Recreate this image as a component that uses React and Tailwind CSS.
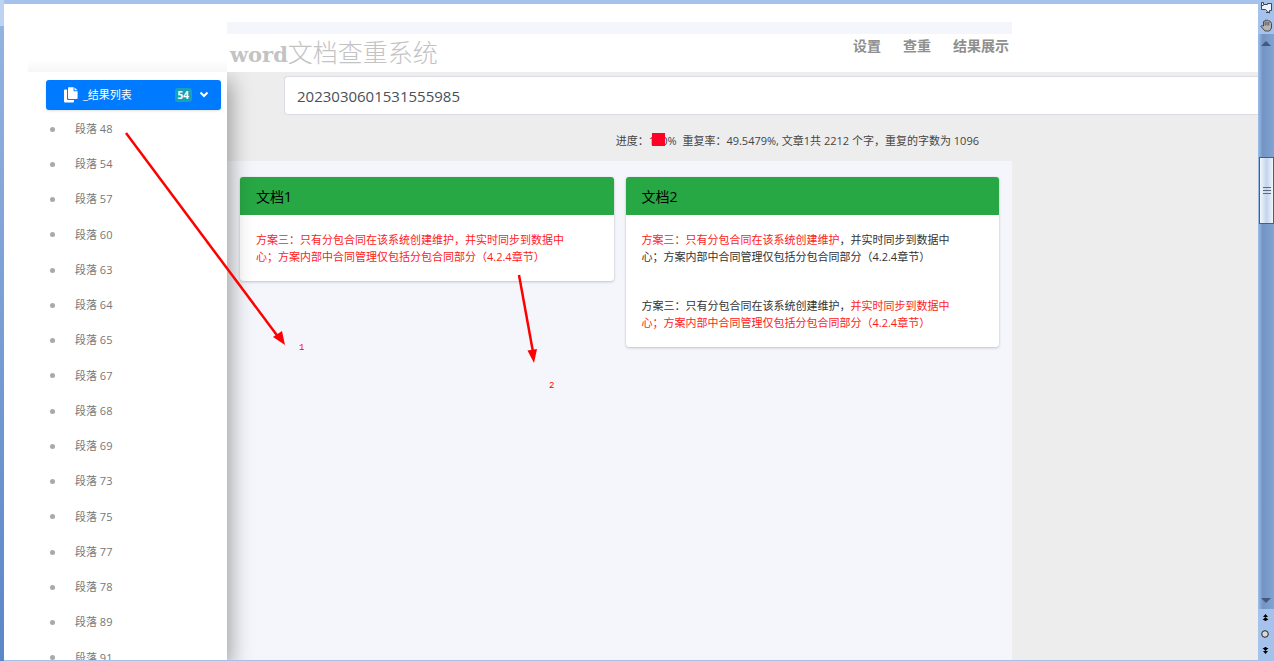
import React, { useState } from 'react';

const PARAGRAPHS = [48, 54, 57, 60, 63, 64, 65, 67, 68, 69, 73, 75, 77, 78, 89, 91];
const NAV = ['设置', '查重', '结果展示'];

function Header() {
  return (
    <header className="flex h-[68px] shrink-0 bg-white">
      <div className="flex w-[223px] shrink-0 flex-col justify-end pl-6">
        <div className="h-3 bg-linear-to-b from-white to-[#f6f6f6]" />
      </div>
      <div className="flex w-[785px] flex-col pt-[18px]">
        <div className="h-3 shrink-0 bg-[#f4f6fb]" />
        <div className="flex flex-1 items-start justify-between pr-[3px] pl-[3px]">
          <h1 className="flex items-baseline pt-[2px] leading-[30px] text-[#c3c3c3]">
            <span className="font-['DejaVu_Serif',serif] text-[21px] font-bold">word</span>
            <span className="font-['Noto_Sans_CJK_SC',sans-serif] text-[25px] font-light">文档查重系统</span>
          </h1>
          <nav className="flex gap-[22px] pt-[2px] text-[14px] leading-5 font-bold text-[#8f8f8f]">
            {NAV.map(n => (
              <a key={n} href="#">{n}</a>
            ))}
          </nav>
        </div>
      </div>
    </header>
  );
}

function Sidebar() {
  const [open, setOpen] = useState(true);

  return (
    <aside className="z-10 flex w-[223px] shrink-0 flex-col bg-white pt-2 shadow-[4px_8px_20px_rgba(0,0,0,0.35)]">
      <button
        type="button"
        aria-expanded={open}
        onClick={() => setOpen(!open)}
        className="mr-[6px] ml-[42px] flex h-[30px] w-[175px] shrink-0 items-center rounded-[3px] bg-[#007bff] pr-3 pl-[18px] text-[11px] text-white shadow-sm"
      >
        <svg width="14" height="16" viewBox="0 0 14 16" fill="currentColor" aria-hidden="true">
          <path d="M0 3.5Q0 2.5 1 2.5H3V12Q3 13 4 13H10V14.5Q10 15.5 9 15.5H1Q0 15.5 0 14.5Z" />
          <path d="M4 1Q4 0.3 4.8 0.3H9.6V4.2H13.6V11Q13.6 12 12.6 12H5Q4 12 4 11Z" />
          <path d="M10.5 0.4L13.6 3.3H10.5Z" />
        </svg>
        <span className="ml-[5px]">_结果列表</span>
        <span className="ml-auto flex h-[14px] items-center rounded-[3px] bg-[#17a2b8] px-[3px] text-[10px] font-bold">54</span>
        <svg className="ml-[7px]" width="10" height="8" viewBox="0 0 10 8" fill="none" stroke="currentColor" strokeWidth="2" aria-hidden="true">
          <path d="M1.5 1.5L5 5L8.5 1.5" />
        </svg>
      </button>
      {open && (
        <ul className="-mb-3 flex flex-1 flex-col justify-between pt-[5px] pl-[46px] text-[11px] text-[#777777]">
          {PARAGRAPHS.map(p => (
            <li key={p} className="flex h-7 shrink-0 items-center">
              <span className="mr-[20px] h-[5px] w-[5px] rounded-full bg-[#a9a9a9]" />
              <a href="#">段落 {p}</a>
            </li>
          ))}
        </ul>
      )}
    </aside>
  );
}

function Card({ title, children }) {
  return (
    <section className="flex-1 overflow-hidden rounded-[3px] bg-white shadow-[0_0_1px_rgba(0,0,0,0.15),0_1px_3px_rgba(0,0,0,0.2)]">
      <h2 className="flex h-[38px] items-center bg-[#28a745] px-4 text-[14px] text-black">{title}</h2>
      <div className="flex flex-col gap-8 p-4 text-[11px] leading-[17px] text-[#333333]">{children}</div>
    </section>
  );
}

function Compare() {
  return (
    <div className="flex w-[785px] flex-1 items-start gap-3 bg-[#f4f6fb] px-[13px] pt-4">
      <Card title="文档1">
        <p className="text-[#ff1a1a]">
          方案三：只有分包合同在该系统创建维护，并实时同步到数据中<br />
          心；方案内部中合同管理仅包括分包合同部分（4.2.4章节）
        </p>
      </Card>
      <Card title="文档2">
        <p>
          <span className="text-[#ff1a1a]">方案三：只有分包合同在该系统创建维护</span>，并实时同步到数据中<br />
          心；方案内部中合同管理仅包括分包合同部分（4.2.4章节）
        </p>
        <p>
          方案三：只有分包合同在该系统创建维护，
          <span className="text-[#ff1a1a]">
            并实时同步到数据中<br />
            心；方案内部中合同管理仅包括分包合同部分（4.2.4章节）
          </span>
        </p>
      </Card>
    </div>
  );
}

function ScrollBar() {
  return (
    <div className="flex w-4 shrink-0 flex-col bg-[#a4c2eb]">
      <div className="flex h-[34px] shrink-0 flex-col items-center justify-between py-[2px]">
        <svg width="13" height="12" viewBox="0 0 13 12" fill="#eef3fb" stroke="#3c4658" aria-hidden="true">
          <path d="M1.5 0.5H3.5V2.5H7.5V1.5H11.5V8.5H9.5V11L7.5 9.5L5.5 7.5H1.5Z" />
          <path d="M1.5 3.5H3.5M6 10.5H9.5" />
        </svg>
        <svg width="13" height="13" viewBox="0 0 13 13" aria-hidden="true">
          <path d="M3.5 7V2.5Q4.3 1.5 5 2.5V1.5Q6 0.5 6.8 1.5Q7.8 0.7 8.6 1.8Q10 1.5 10.2 3Q11.5 3 11.5 4.5V9L9.5 12H5L1 7.5Q1 6 3.5 7Z" fill="#b5b5b5" stroke="#4a4a4a" />
          <path d="M5.2 3V6.5M7 2.5V6.5M8.8 3V6.5" stroke="#555555" />
        </svg>
      </div>
      <div className="flex flex-1 flex-col items-center bg-linear-to-r from-[#9dbde8] via-[#7294c4] via-30% to-[#83a4d2]">
        <svg className="mt-[7px]" width="10" height="5" viewBox="0 0 10 5" aria-hidden="true">
          <path d="M0 5L5 0L10 5Z" fill="#43597f" />
        </svg>
        <div className="mt-[111px] flex h-[67px] w-[15px] flex-col items-center justify-center gap-[2px] self-end border border-[#405f92] bg-linear-to-r from-[#f2f7fd] via-[#c3d5ea] to-[#eef4fb]">
          <span className="h-px w-2 bg-[#5c6b80]" />
          <span className="h-px w-2 bg-[#5c6b80]" />
          <span className="h-px w-2 bg-[#5c6b80]" />
        </div>
        <svg className="mt-auto mb-[6px]" width="10" height="5" viewBox="0 0 10 5" aria-hidden="true">
          <path d="M0 0L5 5L10 0Z" fill="#43597f" />
        </svg>
      </div>
      <div className="flex h-[52px] shrink-0 flex-col items-center justify-between pt-[5px] pr-[2px] pb-[7px]">
        <svg width="7" height="7" viewBox="0 0 7 7" aria-hidden="true">
          <path d="M3.5 0L6 3H1ZM3.5 3L6.5 6H4.5V7H2.5V6H0.5Z" fill="#000000" />
        </svg>
        <svg width="8" height="8" viewBox="0 0 8 8" aria-hidden="true">
          <circle cx="4" cy="4" r="3.3" fill="#d8d8d8" stroke="#222222" />
        </svg>
        <svg width="7" height="7" viewBox="0 0 7 7" aria-hidden="true">
          <path d="M3.5 7L6 4H1ZM3.5 4L6.5 1H4.5V0H2.5V1H0.5Z" fill="#000000" />
        </svg>
      </div>
    </div>
  );
}

// red arrows and step numbers drawn over the page
function Annotations() {
  return (
    <svg
      className="pointer-events-none absolute top-0 left-0 z-20"
      width="600"
      height="400"
      viewBox="0 0 600 400"
      fill="#ff0000"
      aria-hidden="true"
    >
      <path d="M126 133L279 338" stroke="#ff0000" strokeWidth="2.5" />
      <path d="M285 345L273 337L282 331Z" />
      <path d="M519 275L533 352" stroke="#ff0000" strokeWidth="2.5" />
      <path d="M534 363L527.5 350.5L537 349Z" />
      <text x="299" y="350" fontSize="9" fontFamily="Liberation Mono, monospace">1</text>
      <text x="549" y="388" fontSize="9" fontFamily="Liberation Mono, monospace">2</text>
    </svg>
  );
}

export default function App() {
  const [task, setTask] = useState('2023030601531555985');

  return (
    <div className="relative flex h-screen overflow-hidden bg-[#a4c2eb] font-['Open_Sans','Noto_Sans_CJK_SC',sans-serif]">
      <div className="flex w-1 shrink-0 flex-col">
        <div className="h-[26px] bg-[#bdd3f2]" />
        <div className="flex-1 bg-linear-to-b from-[#93b3e0] to-[#5b87c8]" />
      </div>
      <div className="flex min-w-0 flex-1 flex-col pt-1 pb-px">
        <Header />
        <div className="flex min-h-0 flex-1 overflow-hidden bg-[#ededed]">
          <Sidebar />
          <main className="flex min-w-0 flex-1 flex-col pt-1">
            <div className="flex pl-[57px]">
              <input
                type="text"
                aria-label="任务编号"
                value={task}
                onChange={e => setTask(e.target.value)}
                className="h-[39px] min-w-0 flex-1 rounded-l-[4px] border border-r-0 border-[#d9dce0] bg-white px-3 text-[15px] text-[#495057] outline-none"
              />
            </div>
            <div className="flex h-[46px] w-[785px] items-center justify-end pt-[6px] pr-[33px] text-[11px] whitespace-pre text-[#444444]">
              <span>进度：</span>
              <span className="relative">
                100%
                <span className="absolute top-0 left-[3px] h-[13px] w-[13px] bg-[#ff0026]" />
              </span>
              <span>{'  重复率：49.5479%, 文章1共 2212 个字，重复的字数为 1096'}</span>
            </div>
            <Compare />
          </main>
        </div>
      </div>
      <ScrollBar />
      <Annotations />
    </div>
  );
}
